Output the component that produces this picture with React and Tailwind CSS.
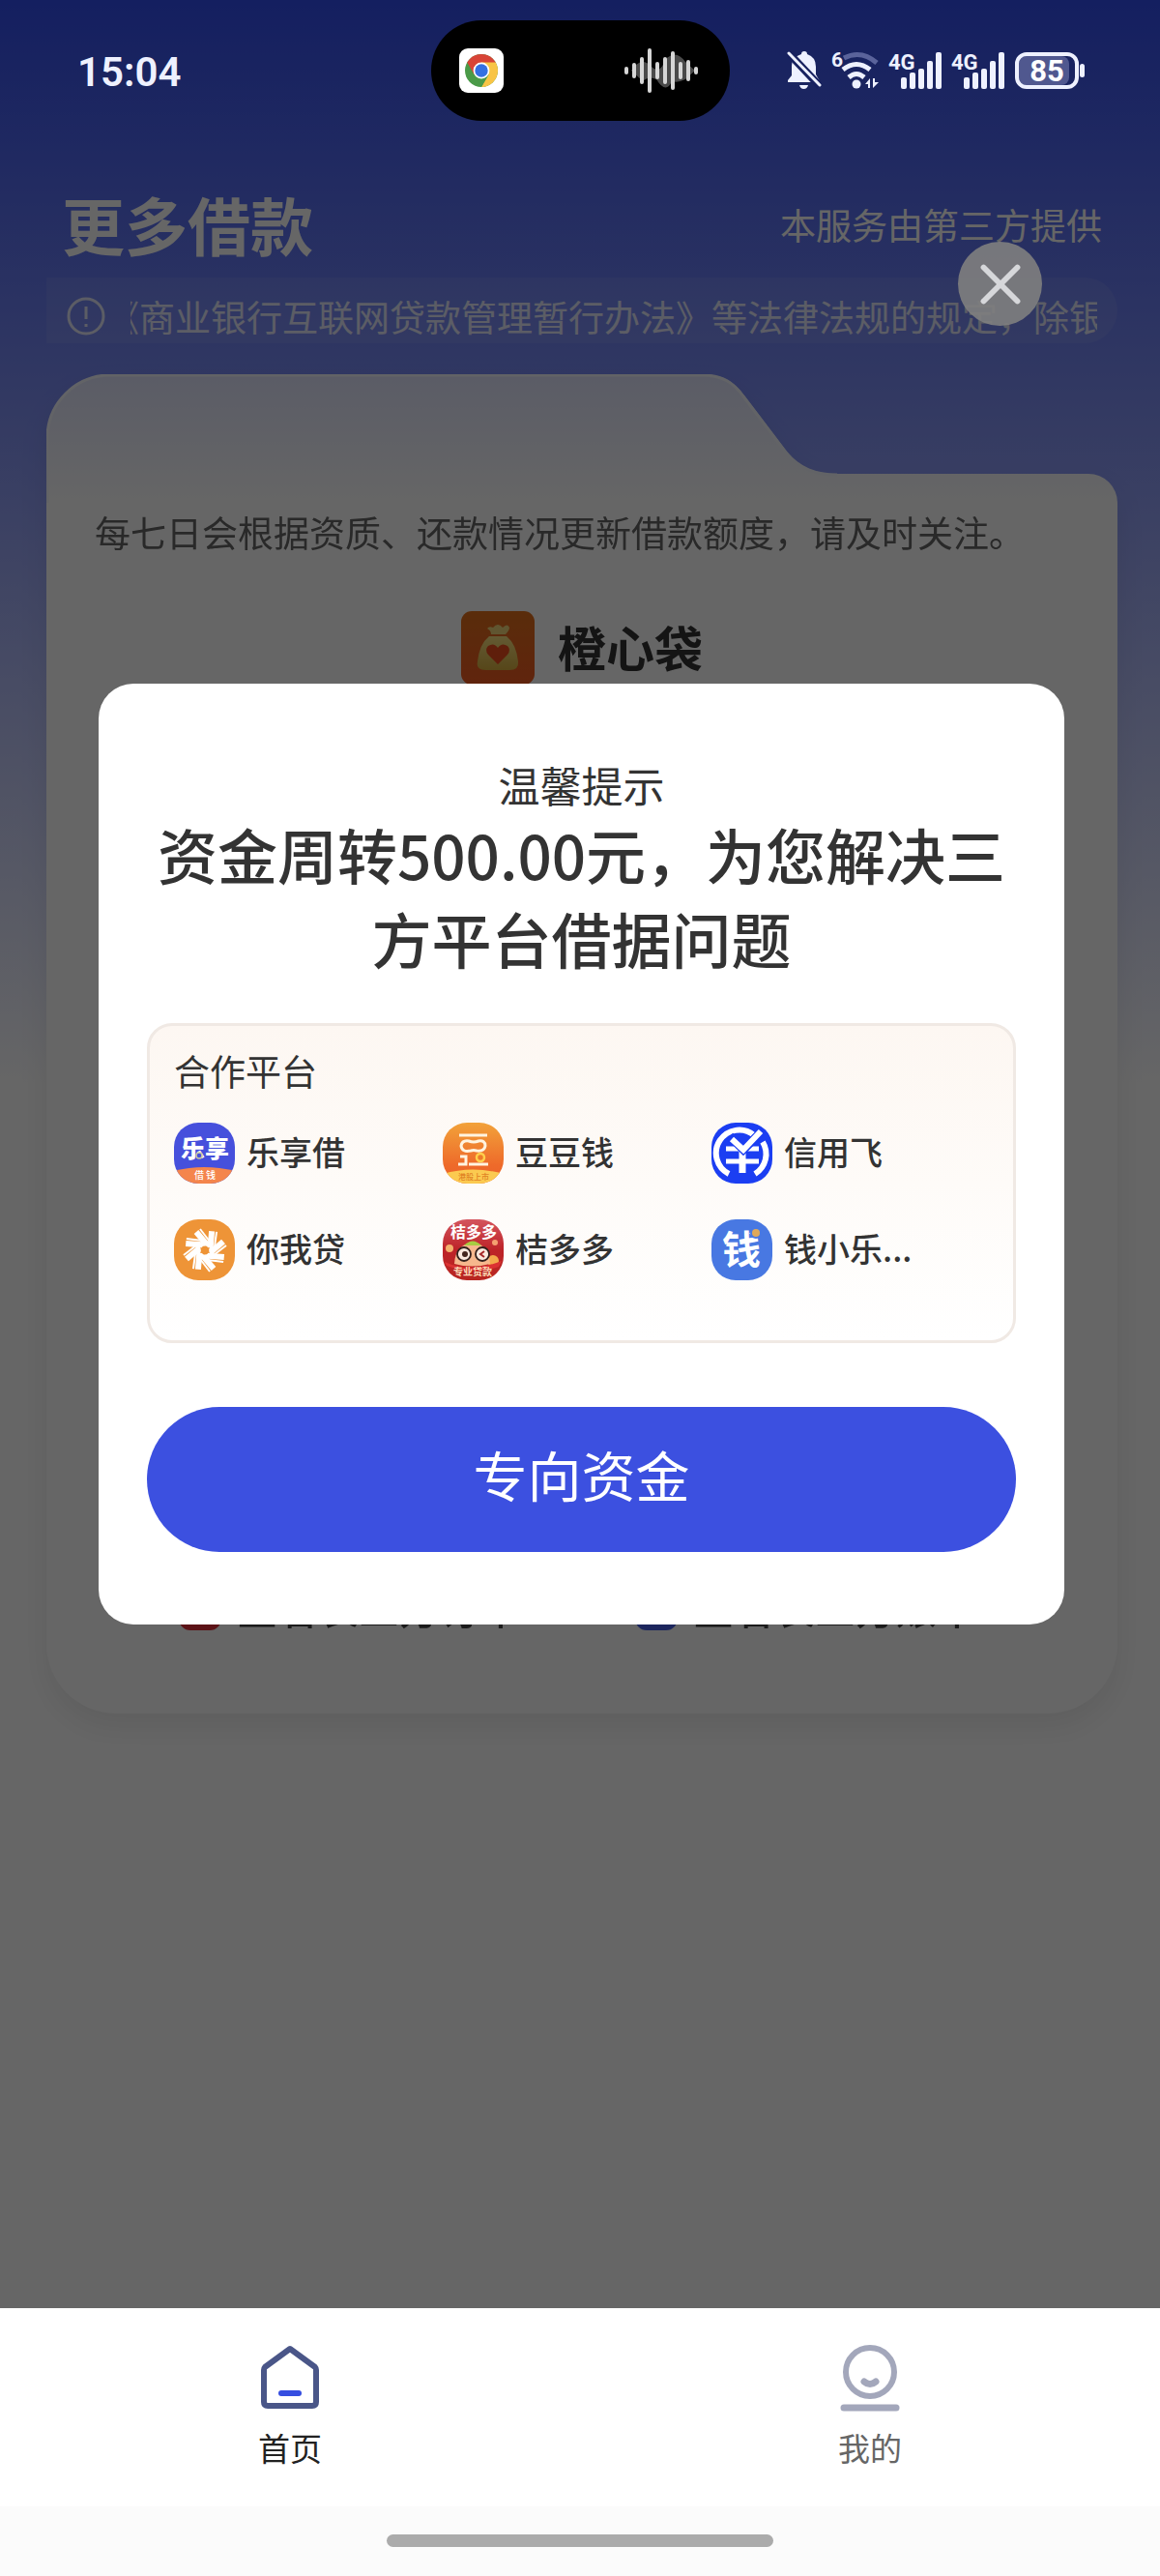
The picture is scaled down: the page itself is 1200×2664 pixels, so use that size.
import React from "react";
import { X } from "lucide-react";

const SIGNAL_BARS = [
  { x: 12, top: 26 },
  { x: 21, top: 21 },
  { x: 30, top: 17 },
  { x: 39, top: 9 },
  { x: 48, top: 0 },
];

const WAVE_BARS = [
  { x: 3, h: 8 },
  { x: 11, h: 16 },
  { x: 19, h: 28 },
  { x: 27, h: 46 },
  { x: 35, h: 18 },
  { x: 43, h: 28 },
  { x: 51, h: 40 },
  { x: 59, h: 18 },
  { x: 67, h: 22 },
  { x: 75, h: 8 },
];

const ChromeIcon = () => (
  <svg viewBox="0 0 46 46" className="size-[46px]">
    <rect width="46" height="46" rx="9" fill="#fff" />
    <circle cx="23" cy="23" r="17" fill="#4a9a48" />
    <path d="M23 23 L8.3 14.5 A17 17 0 0 1 37.7 14.5 Z" fill="#d84437" />
    <path d="M23 14.5 H37.7 A17 17 0 0 1 23 40 L30.4 27.2 Z" fill="#f8c445" />
    <path d="M8.3 14.5 L15.6 27.2 L23 14.5 Z" fill="#d84437" />
    <path d="M15.6 27.2 L23 40 L30.4 27.2 Z" fill="#4a9a48" />
    <circle cx="23" cy="23" r="8.4" fill="#fff" />
    <circle cx="23" cy="23" r="6.7" fill="#3470e2" />
  </svg>
);

const WaveIcon = () => (
  <svg viewBox="0 0 78 46" className="h-[46px] w-[78px]">
    <path
      d="M8 23 Q18 8 28 18 T43 12 Q54 0 64 14 L74 23 L64 32 Q56 36 50 34 Q44 48 34 32 Q26 28 20 34 Z"
      fill="#4a4a4a"
    />
    {WAVE_BARS.map((bar) => (
      <rect
        key={bar.x}
        x={bar.x - 2}
        y={23 - bar.h / 2}
        width="4"
        height={bar.h}
        rx="2"
        fill="#d6d6d6"
      />
    ))}
  </svg>
);

const BellOffIcon = () => (
  <svg viewBox="0 0 36 40" className="h-10 w-9" fill="#eef1ff">
    <path d="M15 3 Q15 0 18 0 Q21 0 21 3 Q30 6 30 16 V24 L34 31 V32 H1 V30 L5 25 V15 Q5 6 15 3 Z" />
    <path d="M13 35 H22 Q21 39 17.500 39 Q14 39 13 35 Z" />
    <path d="M0 0 L34 36" stroke="#17215f" strokeWidth="8" />
    <path d="M2 2 L34 35" stroke="#eef1ff" strokeWidth="3" strokeLinecap="round" />
  </svg>
);

const WifiIcon = () => (
  <svg viewBox="0 0 50 40" className="h-10 w-[50px] overflow-visible">
    <text x="0" y="16" fontSize="21" fontWeight="700" fill="#eef1ff">
      6
    </text>
    <g fill="none" strokeLinecap="butt" strokeWidth="5">
      <path d="M13 7 Q31 -2 47 12" stroke="#5a639b" />
      <path d="M12 19 Q26 8 40 19" stroke="#eef1ff" />
      <path d="M18 27 Q26 20 34 27" stroke="#eef1ff" />
    </g>
    <circle cx="26" cy="34" r="4.500" fill="#eef1ff" />
    <path d="M35 34 L40 28 V38 H38 V34 Z M43 28 V38 L49 32 H45 V28 Z" fill="#eef1ff" />
  </svg>
);

const SignalIcon = () => (
  <svg viewBox="0 0 55 38" className="h-[38px] w-[55px] overflow-visible" fill="#eef1ff">
    <text x="-1" y="18" fontSize="22" fontWeight="700">
      4G
    </text>
    {SIGNAL_BARS.map((bar) => (
      <rect key={bar.x} x={bar.x} y={bar.top} width="6" height={38 - bar.top} rx="2" />
    ))}
  </svg>
);

const BatteryIcon = () => (
  <svg viewBox="0 0 74 38" className="h-[38px] w-[74px]">
    <rect x="4" y="4" width="52" height="30" rx="8" fill="#50588f" />
    <rect x="2" y="2" width="62" height="34" rx="10" fill="none" stroke="#eef1ff" strokeWidth="4" />
    <rect x="67" y="12" width="5" height="14" rx="2.500" fill="#eef1ff" />
    <text x="33" y="30" fontSize="31" fontWeight="700" fill="#fff" textAnchor="middle">
      85
    </text>
  </svg>
);

const StatusBar = () => (
  <div className="relative z-20 grid h-[146px] grid-cols-[1fr_auto_1fr] items-center px-[76px] font-['Roboto',sans-serif]">
    <span className="pl-1 pt-1 text-[42px] font-semibold leading-none text-[#eef1ff]">
      15:04
    </span>
    <div className="flex h-[104px] w-[309px] items-center justify-between rounded-full bg-black pl-[29px] pr-8">
      <ChromeIcon />
      <WaveIcon />
    </div>
    <div className="flex items-center justify-end gap-[10px]">
      <BellOffIcon />
      <WifiIcon />
      <SignalIcon />
      <SignalIcon />
      <BatteryIcon />
    </div>
  </div>
);

const BagLogo = () => (
  <svg viewBox="0 0 76 76" className="size-[76px]">
    <defs>
      <linearGradient id="bagBg" x1="0" y1="0" x2="0" y2="1">
        <stop offset="0" stopColor="#e0701c" />
        <stop offset="1" stopColor="#f05a22" />
      </linearGradient>
      <linearGradient id="bagBody" x1="0" y1="0" x2="0" y2="1">
        <stop offset="0" stopColor="#f8e080" />
        <stop offset="1" stopColor="#d8b040" />
      </linearGradient>
    </defs>
    <rect width="76" height="76" rx="11" fill="url(#bagBg)" />
    <path
      d="M27 18 Q29 15 33 17 Q38 11 43 17 Q48 12 50 17 Q50 20 46 24 H31 Q31 20 27 18 Z"
      fill="#efd478"
    />
    <path
      d="M29 26 H47 Q57 34 59 52 Q60 61 50 61 H26 Q15 61 17 52 Q19 34 29 26 Z"
      fill="url(#bagBody)"
    />
    <path
      d="M38 55 L28 45 Q24 40 28 36 Q34 32 38 38 Q42 32 48 36 Q52 40 48 45 Z"
      fill="#ee4c1c"
    />
  </svg>
);

const TileShape = ({ fill }) => <rect width="63" height="63" rx="25" fill={fill} />;

const LexiangLogo = () => (
  <>
    <defs>
      <clipPath id="lxClip">
        <rect width="63" height="63" rx="25" />
      </clipPath>
    </defs>
    <g clipPath="url(#lxClip)">
      <rect width="63" height="63" fill="#4650dc" />
      <path d="M0 50 Q31 42 63 50 V63 H0 Z" fill="#f4854c" />
    </g>
    <text x="32" y="36" fontSize="25" fontWeight="900" fill="#fff" textAnchor="middle">
      乐享
    </text>
    <circle cx="26" cy="34" r="3" fill="#4650dc" stroke="#c8c8a0" strokeWidth="1.500" />
    <text x="32" y="58" fontSize="10" fontWeight="500" fill="#fff" textAnchor="middle">
      借 钱
    </text>
  </>
);

const DoudouLogo = () => (
  <>
    <defs>
      <linearGradient id="ddBg" x1="0" y1="0" x2="0" y2="1">
        <stop offset="0" stopColor="#f2a23a" />
        <stop offset="0.700" stopColor="#ee6a2a" />
        <stop offset="1" stopColor="#ec6229" />
      </linearGradient>
      <clipPath id="ddClip">
        <rect width="63" height="63" rx="25" />
      </clipPath>
    </defs>
    <g clipPath="url(#ddClip)">
      <rect width="63" height="63" fill="url(#ddBg)" />
      <path d="M0 53 Q31 44 63 53 V63 H0 Z" fill="#fbca50" />
    </g>
    <g fill="none" stroke="#fff4e0" strokeWidth="3">
      <path d="M17 13 H46" />
      <path d="M27 19 Q32 21 37 19 Q44 18 44 24 Q43 30 35 29 Q32 28 29 29 Q20 31 19 24 Q20 18 27 19 Z" />
      <path d="M16 43 H24 V35 H18 M27 43 H47" />
    </g>
    <circle cx="39" cy="36" r="4" fill="#ee7b2a" stroke="#ffd04c" strokeWidth="2.500" />
    <text x="32" y="59" fontSize="8" fontWeight="500" fill="#e08224" textAnchor="middle">
      港股上市
    </text>
  </>
);

const XinyongLogo = () => (
  <>
    <TileShape fill="#1b3ef2" />
    <g fill="none" stroke="#fff">
      <path d="M18 53 A24 24 0 1 1 44 13" strokeWidth="6" />
      <path d="M53 20 A24 24 0 0 1 45 53" strokeWidth="6" />
      <path d="M15 27 H49 M15 40 H49" strokeWidth="5" />
      <path d="M32 28 V52" strokeWidth="7" />
      <path d="M19 14 L33 28 L53 8" stroke="#1b3ef2" strokeWidth="9" />
      <path d="M21 17 L33 28 L51 9" strokeWidth="6" />
    </g>
  </>
);

const NiwoLogo = () => (
  <>
    <TileShape fill="#ee9437" />
    <g stroke="#fff" fill="none">
      {[0, 45, 90, 135, 180, 225, 270, 315].map((angle) => (
        <g key={angle} transform={`rotate(${angle} 32 32)`}>
          <path d="M34 26 L23 13" strokeWidth="6" />
          <path d="M37 23 L27 10" strokeWidth="2" />
        </g>
      ))}
      <circle cx="32" cy="32" r="7" strokeWidth="5" />
    </g>
    <path
      d="M32 27 L33.500 30 L37 29 L35.500 32 L37 35 L33.500 34.500 L32 37 L30.500 34.500 L27 35 L28.500 32 L27 29 L30.500 30 Z"
      fill="#ee9437"
    />
  </>
);

const JieduoLogo = () => (
  <>
    <defs>
      <linearGradient id="jdBg" x1="0" y1="0" x2="0" y2="1">
        <stop offset="0" stopColor="#d4555e" />
        <stop offset="0.500" stopColor="#bd2328" />
        <stop offset="1" stopColor="#b82621" />
      </linearGradient>
    </defs>
    <TileShape fill="url(#jdBg)" />
    <circle cx="7" cy="30" r="4" fill="#f4b06c" />
    <circle cx="54" cy="24" r="3" fill="#f4a070" />
    <circle cx="52" cy="43" r="6" fill="#f3a94c" />
    <path d="M2 44 Q28 56 61 43 L58 49 Q32 58 4 48 Z" fill="#dc3232" />
    <path d="M12 46 Q13 26 31 24 Q48 26 49 46 Q30 51 12 46 Z" fill="#f6b78d" />
    <path d="M22 27 Q31 18 40 27 Z" fill="#a7cc42" />
    <g fill="#fbe9de" stroke="#33201c" strokeWidth="1.800">
      <circle cx="22" cy="36" r="7" />
      <circle cx="41" cy="36" r="7" />
    </g>
    <circle cx="23" cy="36" r="3" fill="#43251d" />
    <path d="M43 33 L39 36 L43 39" fill="none" stroke="#a52626" strokeWidth="2" />
    <text x="32" y="19" fontSize="16" fontWeight="700" fill="#fff" textAnchor="middle">
      桔多多
    </text>
    <text x="31" y="58" fontSize="10" fontWeight="700" fill="#fbdcb8" textAnchor="middle">
      专业贷款
    </text>
  </>
);

const QianLogo = () => (
  <>
    <TileShape fill="#4878e2" />
    <text x="31" y="46" fontSize="40" fontWeight="700" fill="#fff" textAnchor="middle">
      钱
    </text>
    <circle cx="46" cy="14" r="6" fill="#4878e2" />
    <circle cx="46" cy="14" r="4" fill="#dfa95a" />
  </>
);

const platforms = [
  { name: "乐享借", Logo: LexiangLogo },
  { name: "豆豆钱", Logo: DoudouLogo },
  { name: "信用飞", Logo: XinyongLogo },
  { name: "你我贷", Logo: NiwoLogo },
  { name: "桔多多", Logo: JieduoLogo },
  { name: "钱小乐...", Logo: QianLogo },
];

const CardTop = () => (
  <svg
    viewBox="0 0 1108 133"
    preserveAspectRatio="none"
    className="block h-[133px] w-full"
  >
    <defs>
      <linearGradient id="cardTop" x1="0" y1="0" x2="0" y2="1">
        <stop offset="0" stopColor="#e2e6ff" />
        <stop offset="1" stopColor="#fff" />
      </linearGradient>
    </defs>
    <path
      d="M0 133 V66 A66 66 0 0 1 66 0 H678 C700 0 712 8 722 22 L766 80 C780 97 796 103 818 103 H1078 A30 30 0 0 1 1108 133 Z"
      fill="url(#cardTop)"
    />
    <path
      d="M1 133 V66 A65 65 0 0 1 66 1 H678 C700 1 711 9 721 23 L765 81 C779 98 796 104 818 104"
      fill="none"
      stroke="#f5f7ff"
      strokeWidth="3"
    />
  </svg>
);

const RecordLink = ({ label, color }) => (
  <a
    href="#records"
    className="flex items-center gap-4 text-[42px] font-medium leading-[56px] text-[#444]"
  >
    <svg viewBox="0 0 44 48" className="h-12 w-11">
      <rect x="3" y="3" width="38" height="42" rx="9" fill="none" stroke={color} strokeWidth="6" />
      <path d="M12 17 H32 M12 27 H32" stroke={color} strokeWidth="4" />
    </svg>
    {label}
  </a>
);

const LoanCard = () => (
  <section className="ml-12 mr-11 drop-shadow-[0_14px_14px_rgba(0,0,0,0.07)]">
    <CardTop />
    <div className="rounded-b-[72px] bg-white pb-[82px]">
      <p className="px-[50px] text-[37px] leading-[60px] text-[#666]">
        每七日会根据资质、还款情况更新借款额度，请及时关注。
      </p>
      <div className="mt-[52px] flex min-h-[1002px] items-start justify-center gap-6">
        <BagLogo />
        <h2 className="text-[50px] font-bold leading-[72px] text-[#333]">橙心袋</h2>
      </div>
      <div className="grid grid-cols-2 justify-items-center pl-[78px] pr-[86px]">
        <RecordLink label="查看表三方订单" color="#e5303a" />
        <RecordLink label="查看表三方账单" color="#4860e8" />
      </div>
    </div>
  </section>
);

const NoticeBar = () => (
  <div className="ml-12 mr-11 mt-1 flex h-[68px] items-center gap-[26px] rounded-r-full bg-white/8 px-[21px] pt-3 text-white/80">
    <svg
      viewBox="0 0 40 40"
      className="size-[40px] shrink-0"
      fill="none"
      stroke="currentColor"
      strokeWidth="3"
    >
      <circle cx="20" cy="20" r="18" />
      <path d="M20 10 V23 M20 28 V31" />
    </svg>
    <div className="min-w-0 flex-1 overflow-hidden whitespace-nowrap text-[37px] leading-[56px]">
      <span className="-ml-7">
        《商业银行互联网贷款管理暂行办法》等法律法规的规定，除银行业金融机构
      </span>
    </div>
  </div>
);

const TipDialog = () => (
  <div
    role="dialog"
    aria-labelledby="tip-title"
    className="ml-[102px] mr-[99px] w-full rounded-[36px] bg-white px-[50px] py-[75px] text-[#333]"
  >
    <h2 id="tip-title" className="text-center text-[43px] leading-[58px]">
      温馨提示
    </h2>
    <p className="text-center text-[62px] font-medium leading-[87px]">
      资金周转500.00元，为您解决三方平台借据问题
    </p>
    <div className="mt-11 rounded-[26px] border-3 border-[#f0e9e4] bg-linear-to-b from-[#fdf7f2] via-[#fefbf8] to-white pb-[62px] pl-[25px] pr-[34px] pt-[18px]">
      <h3 className="text-[37px] leading-[56px]">合作平台</h3>
      <ul className="mt-[26px] grid grid-cols-3 gap-y-[37px]">
        {platforms.map(({ name, Logo }) => (
          <li
            key={name}
            className="flex items-center gap-3 text-[34px] font-medium leading-[60px]"
          >
            <svg viewBox="0 0 63 63" className="size-[63px] shrink-0 overflow-visible">
              <Logo />
            </svg>
            <span className="pb-[3px]">{name}</span>
          </li>
        ))}
      </ul>
    </div>
    <button
      type="button"
      className="mt-[66px] flex h-[150px] w-full items-center justify-center rounded-full bg-[#3c50e0] pb-3 text-[56px] text-white"
    >
      专向资金
    </button>
  </div>
);

const TabBar = () => (
  <footer>
    <nav className="grid h-[205px] grid-cols-2 bg-white text-[33px] leading-[48px]">
      <a href="#home" className="flex flex-col items-center pt-9 text-[#222]">
        <svg viewBox="0 0 72 72" className="size-[72px]" fill="none" strokeLinejoin="round">
          <path
            d="M36 6 L62 25 Q63 26 63 28 V61 Q63 65 59 65 H13 Q9 65 9 61 V28 Q9 26 10 25 Z"
            stroke="#4a5688"
            strokeWidth="6"
          />
          <path d="M27 52 H45" stroke="#364ee0" strokeWidth="6" strokeLinecap="round" />
        </svg>
        <span className="mt-3">首页</span>
      </a>
      <a href="#mine" className="flex flex-col items-center pt-9 text-[#666]">
        <svg
          viewBox="0 0 72 72"
          className="size-[72px]"
          fill="none"
          stroke="#a3a7bb"
          strokeWidth="6"
          strokeLinecap="round"
        >
          <circle cx="36" cy="30" r="25" />
          <path d="M30 40 Q36 45 42 40" strokeWidth="7" />
          <path d="M9 67 H63" strokeWidth="7" />
        </svg>
        <span className="mt-3">我的</span>
      </a>
    </nav>
    <div className="flex h-[72px] justify-center bg-[#fbfbfb] pt-[29px]">
      <div className="h-[13px] w-1/3 rounded-full bg-[#ababab]" />
    </div>
  </footer>
);

export default function App() {
  return (
    <div className="flex min-h-screen flex-col bg-white font-['Noto_Sans_CJK_SC',sans-serif]">
      <main className="relative flex-1 bg-[linear-gradient(180deg,#334ef0_0px,#ffffff_1120px)]">
        <StatusBar />
        <header className="flex h-[137px] items-center justify-between pl-16 pr-[60px] pt-[34px] text-white">
          <h1 className="text-[65px] font-bold leading-[95px]">更多借款</h1>
          <span className="text-[37px] leading-[56px]">本服务由第三方提供</span>
        </header>
        <NoticeBar />
        <div className="h-8" />
        <LoanCard />

        <div className="absolute inset-0 z-10 flex items-center justify-center bg-black/60">
          <TipDialog />
          <button
            type="button"
            aria-label="关闭"
            className="absolute right-[122px] top-[250px] flex size-[87px] items-center justify-center rounded-full bg-[#808080]/90 text-[#d6d7da]"
          >
            <X size={70} strokeWidth={2} />
          </button>
        </div>
      </main>
      <TabBar />
    </div>
  );
}
